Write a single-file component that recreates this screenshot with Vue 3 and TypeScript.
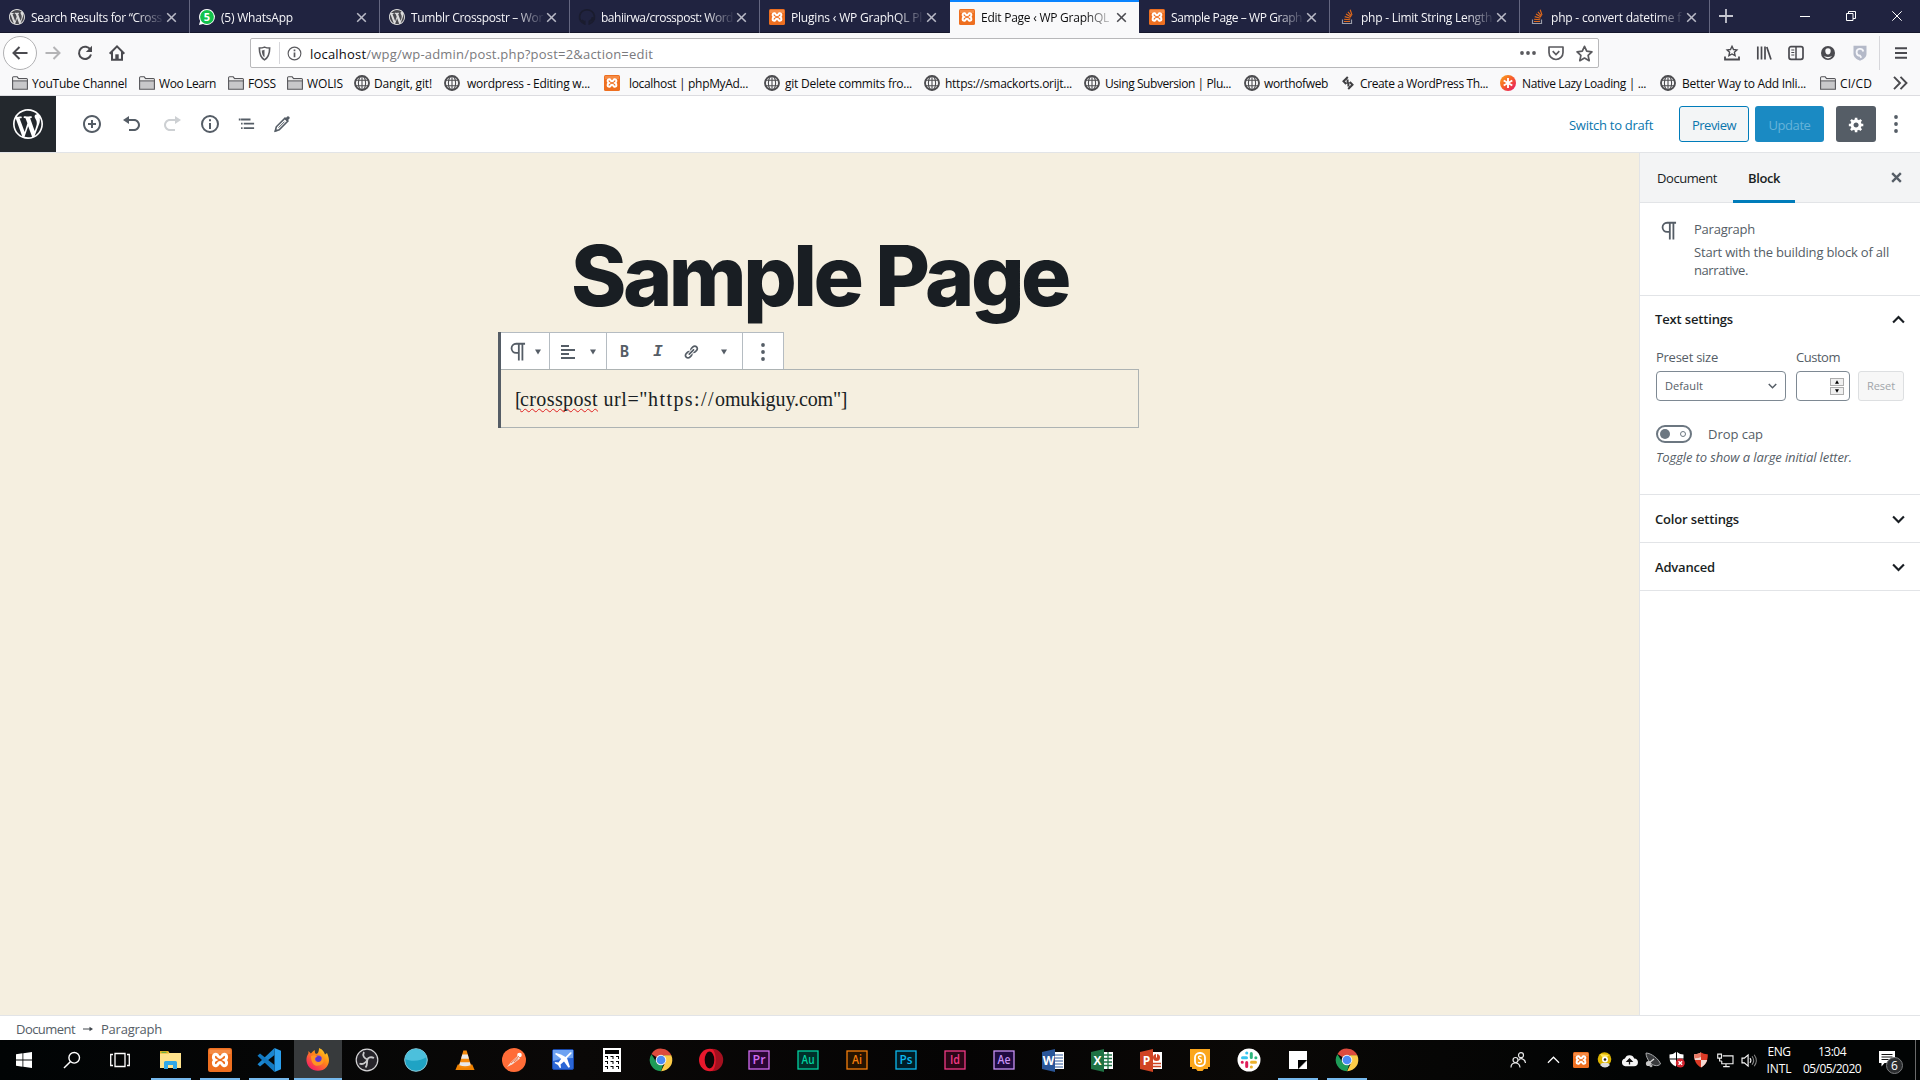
<script setup lang="ts">
import { h, type Directive, type FunctionalComponent } from 'vue'

/* Spreads a label's characters so that it takes the given width. */
const vFit: Directive<HTMLElement, number> = {
  mounted(el, binding) {
    const count = [...(el.textContent ?? '')].length
    if (!count || !binding.value) return
    const natural = el.getBoundingClientRect().width
    el.style.letterSpacing = `${(binding.value - natural) / count}px`
  },
}

const wpPath =
  'M20 10c0-5.51-4.49-10-10-10C4.48 0 0 4.49 0 10c0 5.52 4.48 10 10 10 5.51 0 10-4.48 10-10zM7.78 15.37L4.37 6.22c.55-.02 1.17-.08 1.17-.08.5-.06.44-1.13-.06-1.11 0 0-1.45.11-2.37.11-.18 0-.37 0-.58-.01C4.12 2.69 6.87 1.11 10 1.11c2.33 0 4.45.87 6.05 2.34-.68-.11-1.65.39-1.65 1.58 0 .74.45 1.36.9 2.1.35.61.55 1.36.55 2.46 0 1.49-1.4 5-1.4 5l-3.03-8.37c.54-.02.82-.17.82-.17.5-.05.44-1.25-.06-1.22 0 0-1.44.12-2.38.12-.87 0-2.33-.12-2.33-.12-.5-.03-.56 1.2-.06 1.22l.92.08 1.26 3.41zM17.41 10c.24-.64.74-1.87.43-4.25.7 1.29 1.05 2.71 1.05 4.25 0 3.29-1.73 6.24-4.4 7.78.97-2.59 1.94-5.2 2.92-7.78zM6.1 18.09C3.12 16.65 1.11 13.53 1.11 10c0-1.3.23-2.48.72-3.59C3.25 10.3 4.67 14.2 6.1 18.09zm4.03-6.63l2.58 6.98c-.86.29-1.76.45-2.71.45-.79 0-1.57-.11-2.29-.33.81-2.38 1.62-4.74 2.42-7.10z'

const adobe = (label: string, color: string, bg: string) =>
  `<rect x="1" y="3" width="20" height="18" fill="${bg}" stroke="${color}" stroke-width="1.3"/><text x="11" y="16.3" font-size="12" font-family="Open Sans, sans-serif" font-weight="600" text-anchor="middle" textLength="${label === 'Ai' || label === 'Id' ? 10 : 13}" lengthAdjust="spacingAndGlyphs" fill="${color}">${label}</text>`

const office = (label: string, color: string, page: string) =>
  `<path d="M11 4h11v17H11z" fill="#fff"/>${page}<path d="M0 4l13-3v23L0 21z" fill="${color}"/><text x="6.5" y="17" font-size="12" font-weight="700" font-family="Open Sans, sans-serif" text-anchor="middle" fill="#fff">${label}</text>`

/* [viewBox, markup] */
const icons: Record<string, [string, string]> = {
  wp: ['0 0 20 20', `<path fill="currentColor" d="${wpPath}"/>`],
  wpFav: ['0 0 20 20', `<circle cx="10" cy="10" r="9.6" fill="#4b4b50"/><path fill="#dcdcdc" d="${wpPath}"/>`],
  whatsapp: ['0 0 16 16', '<path d="M8 0a8 8 0 1 1-4 15L0 16l1.100-4A8 8 0 0 1 8 0z" fill="#fff"/><circle cx="8" cy="8" r="6.900" fill="#12c24b"/><text x="8" y="12" font-size="11" font-weight="700" font-family="Open Sans, sans-serif" text-anchor="middle" fill="#fff">5</text>'],
  github: ['0 0 16 16', '<path d="M8 .8A7.200 7.200 0 0 0 5.700 14.900v-2.400c-2 .3-2.400-1-2.900-1.500M8 .8a7.200 7.200 0 0 1 2.300 14.100v-2.600c2-.5 3.200-1.700 3.200-4.400" fill="none" stroke="#1a1c2e" stroke-width="1.700"/>'],
  xampp: ['0 0 16 16', '<rect width="16" height="16" rx="1.500" fill="#ee6f20"/><rect x="1" y="1" width="14" height="3" fill="#f58b45"/><path d="M5.600 4.300C3.400 3.600 2.900 7 4.800 8c-1.900 1-1.400 4.400.8 3.700C6.800 11.300 6.700 9.700 8 9.700s1.200 1.600 2.400 2c2.200.7 2.700-2.700.8-3.700 1.900-1 1.400-4.400-.8-3.700C9.200 4.700 9.300 6.300 8 6.300s-1.200-1.600-2.400-2z" fill="none" stroke="#fff" stroke-width="2"/>'],
  stack: ['0 0 16 16', '<path d="M3.500 10.500v4h9v-4" fill="none" stroke="#9a9ca8" stroke-width="1.200"/><path d="M5 12.500h6M5.100 10.200l6 .6M5.700 7.600l5.700 1.600M7 5l5 3M8.900 2.800l3.600 4.400M11.200.8l1.800 5.300" stroke="#e0691c" stroke-width="1.150"/>'],
  x: ['0 0 12 12', '<path d="M1.300 1.300l9.400 9.400M10.700 1.300l-9.400 9.400" stroke="currentColor" stroke-width="1.700"/>'],
  plus: ['0 0 14 14', '<path d="M7 0v14M0 7h14" stroke="currentColor" stroke-width="1.800"/>'],
  winMin: ['0 0 10 10', '<path d="M0 5.500h10" stroke="#fff"/>'],
  winMax: ['0 0 10 10', '<path d="M.5 2.500h6.500v7H.5zM2.500 2.500v-2h7v7H7" fill="none" stroke="#fff"/>'],
  winClose: ['0 0 10 10', '<path d="M.3.3l9.400 9.400M9.700.3L.3 9.700" stroke="#fff"/>'],
  back: ['0 0 16 16', '<path d="M15.500 8H1.500M7.500 2L1.500 8l6 6" fill="none" stroke="currentColor" stroke-width="2"/>'],
  fwd: ['0 0 16 16', '<path d="M.5 8h14M8.500 2l6 6-6 6" fill="none" stroke="currentColor" stroke-width="2"/>'],
  reload: ['0 0 16 16', '<path d="M13.500 5A6.100 6.100 0 1 0 14 9.500" fill="none" stroke="currentColor" stroke-width="2"/><path d="M15 .8V7H8.800z" fill="currentColor"/>'],
  home: ['0 0 16 16', '<path d="M.7 8.700L8 1.400l7.300 7.300M3 7v7.800h10V7" fill="none" stroke="currentColor" stroke-width="2"/><path d="M6.300 9.300h3.400V15H6.300z" fill="currentColor"/>'],
  shieldHalf: ['0 0 16 16', '<path d="M8 1.200c1.800.8 3.700 1 5.500 1 0 6-1 10-5.500 12.600C3.500 12.200 2.500 8.200 2.500 2.200c1.800 0 3.700-.2 5.500-1z" fill="none" stroke="currentColor" stroke-width="1.700"/><path d="M8 4v8c-2-1.500-2.700-3.500-2.900-7.300C6.100 4.600 7 4.400 8 4z" fill="currentColor"/>'],
  infoThin: ['0 0 16 16', '<circle cx="8" cy="8" r="6.800" fill="none" stroke="currentColor" stroke-width="1.200"/><path d="M8 7v5M8 3.800v1.800" stroke="currentColor" stroke-width="1.800"/>'],
  dots: ['0 0 16 16', '<g fill="currentColor"><circle cx="2" cy="8" r="1.900"/><circle cx="8" cy="8" r="1.900"/><circle cx="14" cy="8" r="1.900"/></g>'],
  pocket: ['0 0 16 16', '<path d="M1 2h14v5.500a7 7 0 0 1-14 0z" fill="none" stroke="currentColor" stroke-width="1.700" stroke-linejoin="round"/><path d="M4.700 6.200L8 9.500l3.300-3.300" fill="none" stroke="currentColor" stroke-width="1.700"/>'],
  star: ['0 0 16 16', '<path d="M8 1.200l2.100 4.600 4.900.6-3.600 3.400 1 5L8 12.300l-4.400 2.500 1-5L1 6.400l4.900-.6z" fill="none" stroke="currentColor" stroke-width="1.600" stroke-linejoin="round"/>'],
  starTray: ['0 0 16 16', '<path d="M8 1.300l1.500 3.200 3.400.4-2.500 2.400.7 3.400L8 9l-3.100 1.700.7-3.400-2.500-2.400 3.400-.4z" fill="none" stroke="currentColor" stroke-width="1.400"/><path d="M1 11.500v3h14v-3" fill="none" stroke="currentColor" stroke-width="1.800"/>'],
  library: ['0 0 16 16', '<path d="M1.800 1.500v13M5.500 1.500v13M9 1.500v13M10.800 2l4.200 12.500" stroke="currentColor" stroke-width="1.700"/>'],
  sidebar: ['0 0 16 16', '<rect x="1" y="1.700" width="14" height="12.600" rx="2" fill="none" stroke="currentColor" stroke-width="1.700"/><path d="M8 2v12" stroke="currentColor" stroke-width="1.500"/><path d="M3.300 5h3M3.300 7.500h3M3.300 10h3" stroke="currentColor"/>'],
  account: ['0 0 16 16', '<circle cx="8" cy="8" r="7" fill="currentColor"/><path d="M8 3.200a2.700 2.700 0 0 1 2.700 2.900C10.700 8 9.700 9.500 8 9.500S5.300 8 5.300 6.100A2.700 2.700 0 0 1 8 3.200z" fill="#f9f9fa"/><path d="M3.800 10.800q4.200 2.400 8.400 0-1.600 2.600-4.200 2.600t-4.200-2.600z" fill="#f9f9fa"/>'],
  ghost: ['0 0 16 16', '<path d="M1.500 .8h13V9c0 3-2.500 5-6.500 6.800C4 14 1.500 12 1.500 9z" fill="#b4b9c8"/><path d="M11.300 6.500a3.400 3.400 0 1 0-3.300 4.200l1.300 2" fill="none" stroke="#f5f6fa" stroke-width="1.800"/>'],
  menu: ['0 0 14 14', '<path d="M1 2.200h12M1 7h12M1 11.800h12" stroke="currentColor" stroke-width="2"/>'],
  folder: ['0 0 16 14', '<path d="M.6 13.200V1.800q0-1 1-1h3.600l1.400 1.800h7.800q1 0 1 1v9.600z" fill="#c8c8ca" stroke="#56565a" stroke-width="1.100"/><path d="M1.200 1.400h3.600L6 3.200h8.800v1.600H1.200z" fill="#f2f2f2"/><path d="M.6 4.900h14.800" stroke="#56565a" stroke-width="1"/>'],
  globe: ['0 0 16 16', '<g fill="none" stroke="#4d4d50"><circle cx="8" cy="8" r="7" stroke-width="1.900"/><ellipse cx="8" cy="8" rx="3.600" ry="7" stroke-width="1.100"/><path d="M8 1v14M1.500 5.300h13M1.500 10.700h13" stroke-width="1.100"/></g>'],
  bolt: ['0 0 14 16', '<path d="M6.800 2L2.500 6.300 5.200 9M7.200 14l4.300-4.300L8.800 7M6.600 4.500v4.300M7.400 11.500V7.200" fill="none" stroke="#3f3f42" stroke-width="2"/>'],
  lazy: ['0 0 16 16', '<defs><linearGradient id="lz" x1="0" y1="0" x2="1" y2="1"><stop offset="0" stop-color="#fba919"/><stop offset=".5" stop-color="#f65a2c"/><stop offset="1" stop-color="#e4106f"/></linearGradient></defs><circle cx="8" cy="8" r="8" fill="url(#lz)"/><path d="M8 3v10M3.700 5.500l8.600 5M12.300 5.500l-8.600 5" stroke="#fff" stroke-width="1.900"/>'],
  chevrons: ['0 0 16 14', '<path d="M2 .8L8 7l-6 6.200M8.500.8l6 6.200-6 6.200" fill="none" stroke="#4a4a4e" stroke-width="1.900"/>'],
  insert: ['0 0 20 20', '<path fill="currentColor" d="M10 1c-5 0-9 4-9 9s4 9 9 9 9-4 9-9-4-9-9-9zm0 16c-3.900 0-7-3.100-7-7s3.100-7 7-7 7 3.100 7 7-3.100 7-7 7zm1-11H9v3H6v2h3v3h2v-3h3V9h-3V6z"/>'],
  undo: ['0 0 20 20', '<path fill="currentColor" d="M12 5H7V2L1 6l6 4V7h5c2.200 0 4 1.800 4 4s-1.800 4-4 4H7v2h5c3.300 0 6-2.700 6-6s-2.700-6-6-6z"/>'],
  redo: ['0 0 20 20', '<path fill="currentColor" d="M8 5h5V2l6 4-6 4V7H8c-2.200 0-4 1.800-4 4s1.800 4 4 4h5v2H8c-3.300 0-6-2.700-6-6s2.700-6 6-6z"/>'],
  info: ['0 0 20 20', '<circle cx="10" cy="10" r="8" fill="none" stroke="currentColor" stroke-width="2"/><path d="M10 9v6M10 5.200v2.100" stroke="currentColor" stroke-width="2"/>'],
  outline: ['0 0 20 20', '<path d="M4.500 5h10.500M7.500 9.500H19M7.500 14.500H19" stroke="currentColor" stroke-width="2"/><path d="M2 4h2v2H2zM4.500 8.500h1.700v2H4.500zM4.500 13.500h1.700v2H4.500z" fill="currentColor"/>'],
  pencil: ['0 0 20 20', '<path d="M3.300 17l1-4.200 8.700-8.700 2.900 2.900-8.700 8.700z" fill="none" stroke="currentColor" stroke-width="1.600"/><path d="M12.700 5.200l2.500-2.700q1-.8 2 .2t.2 2.100l-2.700 2.500zM2.500 17.800l.8-3.200 2.300 2.300z" fill="currentColor"/><path d="M6.500 13.700l6-6" stroke="currentColor"/>'],
  gear: ['0 0 20 20', '<path fill="currentColor" d="M18 12h-2.180c-.17.7-.44 1.350-.81 1.930l1.540 1.540-2.100 2.100-1.540-1.540c-.58.36-1.230.63-1.910.79V19H8v-2.180c-.68-.16-1.330-.43-1.910-.79l-1.540 1.540-2.120-2.120 1.540-1.540c-.36-.58-.63-1.230-.79-1.910H1V9.030h2.170c.16-.7.44-1.350.8-1.940L2.430 5.550l2.100-2.100 1.540 1.540c.58-.37 1.240-.64 1.930-.81V2h3v2.180c.68.16 1.330.43 1.910.79l1.540-1.540 2.120 2.120-1.540 1.540c.36.59.64 1.240.8 1.940H18V12zm-8.500 1.500c1.660 0 3-1.340 3-3s-1.340-3-3-3-3 1.340-3 3 1.340 3 3 3z"/>'],
  vdots: ['0 0 20 20', '<g fill="currentColor"><circle cx="10" cy="3" r="1.900"/><circle cx="10" cy="10" r="1.900"/><circle cx="10" cy="17" r="1.900"/></g>'],
  para: ['0 0 18 20', '<path d="M17 1.800H7.500a4.800 4.800 0 0 0 0 9.600h2.300M10.400 1.800V19.500M14.200 1.800V19.500" fill="none" stroke="currentColor" stroke-width="1.900"/>'],
  alignLeft: ['0 0 16 16', '<path d="M1 2h8M1 6h14M1 10h8M1 14h14" stroke="currentColor" stroke-width="2"/>'],
  caret: ['0 0 6 6', '<path d="M0 .5h6l-3 5z" fill="currentColor"/>'],
  link: ['0 0 20 20', '<path fill="currentColor" d="M17.740 2.760c1.680 1.690 1.680 4.410 0 6.100l-1.530 1.520c-1.120 1.120-2.700 1.470-4.140 1.090l2.620-2.610.76-.77.76-.76c.84-.84.84-2.200 0-3.040-.84-.85-2.200-.85-3.040 0l-.77.76-3.380 3.380c-.37-1.440-.02-3.020 1.100-4.140l1.520-1.530c1.690-1.680 4.420-1.680 6.100 0zM8.590 13.430l5.340-5.340c.42-.42.42-1.100 0-1.520-.44-.43-1.130-.39-1.530 0l-5.330 5.340c-.42.42-.42 1.100 0 1.520.44.43 1.130.39 1.520 0zm-.76 2.290l4.140-4.150c.38 1.440.03 3.020-1.090 4.140l-1.520 1.530c-1.690 1.680-4.410 1.680-6.100 0-1.680-1.680-1.680-4.420 0-6.100l1.530-1.520c1.120-1.120 2.700-1.470 4.140-1.100l-4.140 4.150c-.85.84-.85 2.200 0 3.050.84.84 2.200.84 3.040 0z"/>'],
  close: ['0 0 12 12', '<path d="M2 2l8 8M10 2l-8 8" stroke="#555d66" stroke-width="2.200"/>'],
  up: ['0 0 12 8', '<path d="M1 6.700l5-5 5 5" fill="none" stroke="currentColor" stroke-width="2"/>'],
  down: ['0 0 12 8', '<path d="M1 1.300l5 5 5-5" fill="none" stroke="currentColor" stroke-width="2"/>'],
  start: ['0 0 16 16', '<path d="M0 2.200L6.500 1.300v6.300H0zM7.300 1.200L16 0v7.600H7.300zM0 8.400h6.500v6.300L0 13.800zM7.300 8.400H16V16l-8.700-1.200z" fill="#fff"/>'],
  search: ['0 0 18 18', '<circle cx="11.200" cy="6.800" r="5.300" fill="none" stroke="#fff" stroke-width="1.400"/><path d="M7.300 10.700L1 17" stroke="#fff" stroke-width="1.500"/>'],
  taskview: ['0 0 20 16', '<path d="M5 1.500h10v13H5zM3 2.500H.7v11H3M17 2.500h2.300v11H17" fill="none" stroke="#fff" stroke-width="1.300"/>'],
  explorer: ['0 0 22 20', '<path d="M0 1h8l1.500 2H21v15H0z" fill="#ffe38c"/><path d="M0 1h8l1 2.500H0z" fill="#e6b422"/><path d="M1.500 1.800h5v1h-5z" fill="#4cae4f"/><path d="M4 19v-6.500q0-1.500 1.500-1.500h10q1.500 0 1.500 1.500V19h-4v-4H8v4z" fill="#31a8e8"/>'],
  vscode: ['0 0 24 24', '<path d="M17.500 0L24 2.800v18.400L17.500 24z" fill="#2ba0ee"/><path d="M17.500 0v7L3 18.500.5 16.200z" fill="#1b86d0"/><path d="M17.500 24v-7L3 5.500.5 7.800z" fill="#1279c2"/>'],
  firefox: ['0 0 24 24', '<defs><linearGradient id="ff" x1="1" y1="0" x2=".2" y2="1"><stop offset="0" stop-color="#ffe226"/><stop offset=".45" stop-color="#ff8a16"/><stop offset="1" stop-color="#f5156c"/></linearGradient></defs><path d="M13 0c4 1.500 5.300 4.500 6 6.500L21 5c2.800 6 2.600 10-.4 14-4 5-12.500 5-16.800.8C-.6 15-.2 9 2.400 5.500V3l2.400 2.600C6 4.500 7 2.500 9 2.200 8.500 4 9 5 10 6c2 0 3-3 3-6z" fill="url(#ff)"/><circle cx="12" cy="12.500" r="5" fill="#7440e0"/><path d="M5 8c3-1.700 5-.4 7 1-2.500-.2-3.300 1.300-3 2.500.4 2.400 3 2.800 4.500 2 1.700-.8 3-3 1.500-6.500 3.500 2.500 4 7 .6 9.500C10 20 5 16.500 5 8z" fill="#ff9422"/><circle cx="12.700" cy="11" r="2.700" fill="#5d36c8"/>'],
  obs: ['0 0 24 24', '<circle cx="12" cy="12" r="10.800" fill="#26242a" stroke="#d4d4d6" stroke-width="1.200"/><g fill="none" stroke="#c9c9cb" stroke-width="1.800"><path d="M9 4c-2 4 .5 6.500 3.500 7.500M19 10c-3-1.500-6-.5-6.500 1.500-1 3 .3 6-2 8M4.500 15.500c3 1.500 7-1 8-4"/></g>'],
  teal: ['0 0 24 24', '<circle cx="12" cy="12" r="11.300" fill="#1fa3c4" stroke="#8cc9d8"/><path d="M.8 11C8 14 17 13 22.800 9A11.300 11.300 0 0 0 .8 11z" fill="#4cc0dc"/>'],
  vlc: ['0 0 22 24', '<path d="M3 17h16l2.500 6H.5z" fill="#f08200"/><path d="M9.200 1.500h3.600L18 19.500q-7 3-14 0z" fill="#f58a0b"/><path d="M8 6h6l1.300 4.500H6.700zM5.600 14.500h10.800l.8 3.200q-6 2.200-12.400 0z" fill="#e9e9e9"/>'],
  postman: ['0 0 24 24', '<circle cx="12" cy="12" r="12" fill="#ff6c37"/><path d="M5 19l4.500-5.500 6-5.500 2.500 2.500-7.500 5.800z" fill="#f6dfd5"/><circle cx="17.500" cy="7" r="2.300" fill="#fff"/><path d="M9 15l8-7M12 14l4-3.500" stroke="#e66030" stroke-width=".8"/>'],
  plane: ['0 0 22 22', '<rect x=".5" y=".5" width="21" height="20" rx="1.500" fill="#2b66d6" stroke="#1746a8"/><path d="M1 1h20v8Q10 9 1 12z" fill="#6ea3f2"/><path d="M4 4l5 1.500L13.500 8 18 3.500q2-1 1.500 1L15 9l3 9-1.500.7-4.500-6.200-3.500 3 .5 3-1 .8-2-3.300L2.500 14l.8-1 3.200.4 2.700-3.600L3 5z" fill="#fff"/>'],
  calc: ['0 0 18 24', '<path fill="#fff" d="M0 0h18v24H0z"/><path d="M2 2h14v4H2zM2 8h3v3H4V9H2zM7.500 8h3v3h-1V9h-2zM13 8h3v3h-1V9h-2zM2 13h3v3H4v-2H2zM7.500 13h3v3h-1v-2h-2zM13 13h3v3h-1v-2h-2zM2 18h3v3H4v-2H2zM7.500 18h3v3h-1v-2h-2zM13 18h3v3h-1v-2h-2z" fill="#050505"/>'],
  chrome: ['0 0 24 24', '<path d="M12 12L2.500 6A11.200 11.200 0 0 1 22.400 7.500H12z" fill="#dd4b3e"/><path d="M22.300 7.300A11.200 11.200 0 0 1 12 23.200L16.500 14 15 7.300z" fill="#fccb48"/><path d="M12 23.200A11.200 11.200 0 0 1 2.400 6.200L8 15l6 2z" fill="#1e9c58"/><circle cx="12" cy="12" r="5.300" fill="#f4f4f4"/><circle cx="12" cy="12" r="4.300" fill="#4c8bf5"/>'],
  opera: ['0 0 24 24', '<ellipse cx="12" cy="12" rx="11" ry="11.300" fill="#e8182c"/><path d="M14 .8a11 11 0 0 1 0 22.400c5-3 5-19 0-22.400z" fill="#a4101f"/><ellipse cx="11.500" cy="12" rx="4.800" ry="8.500" fill="#0c0506"/>'],
  pr: ['0 0 22 24', adobe('Pr', '#d16bf2', '#2a0634')],
  au: ['0 0 22 24', adobe('Au', '#00d2a0', '#00302a')],
  ai: ['0 0 22 24', adobe('Ai', '#f57f0c', '#261300')],
  ps: ['0 0 22 24', adobe('Ps', '#0cb8ee', '#001d26')],
  id: ['0 0 22 24', adobe('Id', '#f23a86', '#2b0616')],
  ae: ['0 0 22 24', adobe('Ae', '#c893f5', '#1f0a40')],
  word: ['0 0 22 25', office('W', '#2a5699', '<path d="M13 7h8M13 10h8M13 13h8M13 16h8M13 19h8" stroke="#2a5699" stroke-width="1.200"/>')],
  excel: ['0 0 22 25', office('X', '#1f7244', '<path d="M13 7h8M13 10.500h8M13 14h8M13 17.500h8M17 4v17" stroke="#1f7244" stroke-width="1.300"/>')],
  ppt: ['0 0 22 25', office('P', '#d04423', '<circle cx="16.500" cy="9.500" r="3.500" fill="#d04423"/><path d="M16.500 9.500V5.500" stroke="#fff"/><path d="M13 15.500h8M13 18.500h8" stroke="#d04423" stroke-width="1.300"/>')],
  scratch: ['0 0 22 24', '<path d="M1 1h20v18h-2v2h-4l-1.500 2h-5L7 21H3v-2H1z" fill="#fba61c"/><rect x="6" y="5" width="10" height="13" rx="4.500" fill="none" stroke="#fff" stroke-width="1.800"/><path d="M12.500 8.500q-3-1-3 1c0 2 3 1.500 3 3.500s-2 2-3.500 1.300" fill="none" stroke="#fff" stroke-width="1.400"/>'],
  slack: ['0 0 24 24', '<circle cx="12" cy="12" r="11.500" fill="#fff"/><g stroke-width="3" stroke-linecap="round"><path d="M5.500 9.700h4M9.700 5h.1" stroke="#36c5f0"/><path d="M14.300 5.500v4M18.800 9.700h.1" stroke="#2eb67d"/><path d="M14.500 14.300h4M14.300 18.900h.1" stroke="#ecb22e"/><path d="M9.700 14.500v4M5.200 14.300h.1" stroke="#e01e5a"/></g>'],
  sticky: ['0 0 18 18', '<path d="M0 0h18v9L9 18H0z" fill="#fff"/><path d="M18 9H9v9z" fill="#000"/><path d="M18 9.500V18H9.500z" fill="#fff"/>'],
  people: ['0 0 16 16', '<g fill="none" stroke="#e8e8e8" stroke-width="1.200"><circle cx="11" cy="3.200" r="2.500"/><circle cx="5.500" cy="8" r="2.500"/><path d="M1 15.500c0-6 8.500-6 9 0M8.500 8.500C10 5.500 15 6.300 15.500 11"/></g>'],
  trayUp: ['0 0 14 8', '<path d="M1 7l6-6 6 6" fill="none" stroke="#fff" stroke-width="1.300"/>'],
  disc: ['0 0 16 16', '<circle cx="7.500" cy="7" r="6.800" fill="#ddb400"/><path d="M3 2l9 1-5 5z" fill="#ffe45a"/><circle cx="8" cy="7.500" r="3" fill="#fff"/><circle cx="8" cy="7.500" r="1.300" fill="#222"/><path d="M3 13q5 5 10 0l-2-2H5z" fill="#dcdcdc"/>'],
  cloud: ['0 0 16 16', '<path d="M4 13.500a3.800 3.800 0 0 1-.3-7.400A4.600 4.600 0 0 1 12.400 6 3.700 3.700 0 0 1 12 13.500z" fill="#f5f5f5"/><path d="M8 11.800V8M5.800 8.800L8 6.500l2.200 2.300z" fill="#111" stroke="#111" stroke-width="1.200"/>'],
  dish: ['0 0 16 16', '<path d="M1 1c5 0 13 6 14.500 11-3 3-8 1.500-10.500-1.500S1 4 1 1z" fill="#393b3d" stroke="#a9abad"/><path d="M4 11l5-4" stroke="#ddd" stroke-width="1.300"/><circle cx="3.500" cy="11.500" r="2.600" fill="#c8c8c8"/><circle cx="6" cy="13.800" r="1.500" fill="#b0b0b0"/>'],
  defender: ['0 0 16 16', '<path d="M7 0v6.500H.5V2.500Q4 2.500 7 0zM8 0q3 2.500 6.500 2.500v4H8zM.6 7.500H7v7Q1.500 12 .6 7.500zM8 7.500h6.400Q13.500 12 8 14.500z" fill="#fff"/><circle cx="11.300" cy="11" r="4.500" fill="#d62430"/><path d="M9.500 9.200l3.600 3.600M13.100 9.200l-3.600 3.600" stroke="#fff" stroke-width="1.300"/>'],
  redShield: ['0 0 16 16', '<path d="M8 .5q3 2 6.800 1.800C15 9 12.500 13 8 15.500 3.500 13 1 9 1.200 2.300 5 2.500 8 .5 8 .5z" fill="#dc3a26"/><path d="M8 8h6.200q-1.200 4.700-6.200 7.500z" fill="#f2d8d2"/><path d="M8 .5Q5 2.500 1.200 2.300 1.100 5.300 1.800 8H8z" fill="#f2d8d2"/><path d="M8 .5Q5 2.500 1.200 2.300q0 2 .4 4Q5 6.500 8 5z" fill="#e87a66"/>'],
  network: ['0 0 18 16', '<g fill="none" stroke="#f2f2f2" stroke-width="1.200"><path d="M6 3h11v8.500H5V8.500M9.500 12v2.500M6.500 14.500h7"/><path d="M.7 1.200h4V5.500h-4zM2.700 5.500v3H5"/></g>'],
  speaker: ['0 0 18 16', '<path d="M1 5.500h2.500L7.500 2v12l-4-3.500H1z" fill="none" stroke="#fff" stroke-width="1.200"/><path d="M9.500 5.500q2 2.500 0 5" fill="none" stroke="#eee" stroke-width="1.200"/><path d="M11.700 3.500q3.500 4.500 0 9M14 1.800q4.500 6.200 0 12.400" fill="none" stroke="#888" stroke-width="1.100"/>'],
  notify: ['0 0 16 16', '<path d="M0 0h16v12H5.500L2.500 15.500V12H0z" fill="#fff"/><path d="M2.500 3.500h11M2.500 6h11M2.500 8.500h7" stroke="#111"/>'],
}

const Ico: FunctionalComponent<{ n: string; w: number; t?: number }> = (p) =>
  h('svg', {
    class: 'ico',
    viewBox: icons[p.n][0],
    width: p.w,
    height: p.t ?? p.w,
    innerHTML: icons[p.n][1],
  })
Ico.props = ['n', 'w', 't']

const tabs = [
  { icon: 'wpFav', label: 'Search Results for “Cross', w: 131 },
  { icon: 'whatsapp', label: '(5) WhatsApp', w: 72 },
  { icon: 'wpFav', label: 'Tumblr Crosspostr – Wor', w: 132 },
  { icon: 'github', label: 'bahiirwa/crosspost: Word', w: 132 },
  { icon: 'xampp', label: 'Plugins ‹ WP GraphQL Pl', w: 131 },
  { icon: 'xampp', label: 'Edit Page ‹ WP GraphQL', w: 128, active: true },
  { icon: 'xampp', label: 'Sample Page – WP Graph', w: 131 },
  { icon: 'stack', label: 'php - Limit String Length', w: 131 },
  { icon: 'stack', label: 'php - convert datetime f', w: 130 },
]

const bookmarks = [
  { icon: 'folder', label: 'YouTube Channel', w: 95, cell: 127 },
  { icon: 'folder', label: 'Woo Learn', w: 57, cell: 89 },
  { icon: 'folder', label: 'FOSS', w: 28, cell: 59 },
  { icon: 'folder', label: 'WOLIS', w: 36, cell: 67 },
  { icon: 'globe', label: 'Dangit, git!', w: 58, cell: 90 },
  { icon: 'globe', label: 'wordpress - Editing w...', w: 123, cell: 160, gap: 7 },
  { icon: 'xampp', label: 'localhost | phpMyAd...', w: 119, cell: 160, gap: 9 },
  { icon: 'globe', label: 'git Delete commits fro...', w: 127, cell: 160, gap: 5 },
  { icon: 'globe', label: 'https://smackorts.orijt...', w: 127, cell: 160, gap: 5 },
  { icon: 'globe', label: 'Using Subversion | Plu...', w: 126, cell: 160, gap: 5 },
  { icon: 'globe', label: 'worthofweb', w: 64, cell: 96 },
  { icon: 'bolt', label: 'Create a WordPress Th...', w: 128, cell: 160 },
  { icon: 'lazy', label: 'Native Lazy Loading | ...', w: 124, cell: 160, gap: 6 },
  { icon: 'globe', label: 'Better Way to Add Inli...', w: 124, cell: 160, gap: 6 },
  { icon: 'folder', label: 'CI/CD', w: 32, cell: 72 },
]

const navRight = ['starTray', 'library', 'sidebar', 'account', 'ghost']

const apps = [
  { icon: 'explorer', w: 22, t: 20, open: true },
  { icon: 'xampp', w: 24, open: true },
  { icon: 'vscode', w: 24, open: true },
  { icon: 'firefox', w: 24, open: true, active: true },
  { icon: 'obs', w: 24 },
  { icon: 'teal', w: 24 },
  { icon: 'vlc', w: 20, t: 22 },
  { icon: 'postman', w: 24 },
  { icon: 'plane', w: 22 },
  { icon: 'calc', w: 18, t: 24 },
  { icon: 'chrome', w: 24 },
  { icon: 'opera', w: 24 },
  { icon: 'pr', w: 22, t: 24 },
  { icon: 'au', w: 22, t: 24 },
  { icon: 'ai', w: 22, t: 24 },
  { icon: 'ps', w: 22, t: 24 },
  { icon: 'id', w: 22, t: 24 },
  { icon: 'ae', w: 22, t: 24 },
  { icon: 'word', w: 22, t: 25 },
  { icon: 'excel', w: 22, t: 25 },
  { icon: 'ppt', w: 22, t: 25 },
  { icon: 'scratch', w: 22, t: 24 },
  { icon: 'slack', w: 24 },
  { icon: 'sticky', w: 18, open: true },
  { icon: 'chrome', w: 24, open: true },
]

const tray = [
  { icon: 'xampp', w: 16 },
  { icon: 'disc', w: 16 },
  { icon: 'cloud', w: 17 },
  { icon: 'dish', w: 16 },
  { icon: 'defender', w: 16 },
  { icon: 'redShield', w: 16 },
  { icon: 'network', w: 17, t: 15 },
  { icon: 'speaker', w: 17, t: 15 },
]
</script>

<template>
  <div class="screen">
    <div class="tabs">
      <div v-for="(t, i) in tabs" :key="i" class="tab" :class="{ active: t.active, before: i === 4 }">
        <Ico :n="t.icon" :w="16" />
        <span class="tab-text"><span v-fit="t.w" class="fit">{{ t.label }}</span></span>
        <Ico n="x" :w="11" />
      </div>
      <span class="new-tab"><Ico n="plus" :w="14" /></span>
      <span class="win"><Ico n="winMin" :w="10" /></span>
      <span class="win"><Ico n="winMax" :w="10" /></span>
      <span class="win"><Ico n="winClose" :w="10" /></span>
    </div>

    <div class="nav">
      <span class="back"><Ico n="back" :w="16" /></span>
      <span class="nav-btn dim"><Ico n="fwd" :w="16" /></span>
      <span class="nav-btn"><Ico n="reload" :w="16" /></span>
      <span class="nav-btn"><Ico n="home" :w="16" /></span>
      <div class="url">
        <Ico n="shieldHalf" :w="15" />
        <i class="url-line"></i>
        <Ico n="infoThin" :w="15" />
        <span v-fit="343" class="fit url-text"><b>localhost</b>/wpg/wp-admin/post.php?post=2&amp;action=edit</span>
        <span class="url-icons">
          <Ico n="dots" :w="16" /><Ico n="pocket" :w="16" /><Ico n="star" :w="17" />
        </span>
      </div>
      <div class="nav-right">
        <Ico v-for="n in navRight" :key="n" :n="n" :w="16" />
      </div>
      <span class="burger"><Ico n="menu" :w="14" /></span>
    </div>

    <div class="bookmarks">
      <span v-for="b in bookmarks" :key="b.label" class="bm" :style="{ width: b.cell + 'px', gap: (b.gap ?? 4) + 'px' }">
        <Ico :n="b.icon" :w="16" :t="b.icon === 'folder' ? 14 : 16" />
        <span v-fit="b.w" class="fit">{{ b.label }}</span>
      </span>
      <Ico n="chevrons" :w="16" :t="14" />
    </div>

    <div class="header">
      <span class="wp-logo"><Ico n="wp" :w="30" /></span>
      <div class="tools">
        <Ico n="insert" :w="20" /><Ico n="undo" :w="20" class="t-undo" /><Ico n="redo" :w="20" class="t-redo" />
        <Ico n="info" :w="20" class="t-info" /><Ico n="outline" :w="18" class="t-outline" /><Ico n="pencil" :w="20" />
      </div>
      <span class="draft"><span v-fit="84" class="fit">Switch to draft</span></span>
      <span class="btn preview"><span v-fit="44" class="fit">Preview</span></span>
      <span class="btn update"><span v-fit="42" class="fit">Update</span></span>
      <span class="btn gear"><Ico n="gear" :w="17" /></span>
      <span class="more"><Ico n="vdots" :w="20" /></span>
    </div>

    <div class="body">
      <main class="canvas">
        <h1><span v-fit="497" class="fit">Sample Page</span></h1>
        <div class="block">
          <div class="toolbar">
            <div class="grp g1"><Ico n="para" :w="17" :t="19" /><Ico n="caret" :w="6" /></div>
            <div class="grp g2"><Ico n="alignLeft" :w="16" /><Ico n="caret" :w="6" /></div>
            <div class="grp g3">
              <span class="bold">B</span><span class="ital">I</span><Ico n="link" :w="16" /><Ico n="caret" :w="6" />
            </div>
            <div class="grp g4"><Ico n="vdots" :w="20" :t="20" /></div>
          </div>
          <p class="para">
            <span v-fit="5" class="fit">[</span><u v-fit="78" class="fit">crosspost</u><span v-fit="50" class="fit">&nbsp;url="</span><span v-fit="67" class="fit">https://</span><span v-fit="118" class="fit">omukiguy.com</span><span v-fit="14" class="fit">"]</span>
          </p>
        </div>
      </main>

      <aside class="side">
        <div class="side-tabs">
          <span class="st doc"><span v-fit="60" class="fit">Document</span></span>
          <span class="st on"><span v-fit="32" class="fit">Block</span></span>
          <Ico n="close" :w="13" />
        </div>
        <div class="card">
          <Ico n="para" :w="17" :t="19" />
          <div>
            <div class="card-title"><span v-fit="61" class="fit">Paragraph</span></div>
            <div class="card-text"><span v-fit="195" class="fit">Start with the building block of all</span></div>
            <div class="card-text"><span v-fit="54" class="fit">narrative.</span></div>
          </div>
        </div>
        <section class="panel text">
          <header><span v-fit="78" class="fit">Text settings</span><Ico n="up" :w="13" :t="9" /></header>
          <div class="labels">
            <span class="lab1"><span v-fit="62" class="fit">Preset size</span></span>
            <span v-fit="44" class="fit">Custom</span>
          </div>
          <div class="controls">
            <div class="select"><span v-fit="38" class="fit">Default</span><Ico n="down" :w="9" :t="6" /></div>
            <div class="number">
              <div class="spin"><span><Ico n="caret" :w="6" :t="4" class="flip" /></span><span><Ico n="caret" :w="6" :t="4" /></span></div>
            </div>
            <div class="reset"><span v-fit="28" class="fit">Reset</span></div>
          </div>
          <div class="toggle-row">
            <span class="toggle"><i></i><b></b></span><span v-fit="55" class="fit">Drop cap</span>
          </div>
          <div class="help"><span v-fit="196" class="fit">Toggle to show a large initial letter.</span></div>
        </section>
        <section class="panel"><header><span v-fit="84" class="fit">Color settings</span><Ico n="down" :w="13" :t="9" /></header></section>
        <section class="panel"><header><span v-fit="60" class="fit">Advanced</span><Ico n="down" :w="13" :t="9" /></header></section>
      </aside>
    </div>

    <footer class="crumbs">
      <span v-fit="59" class="fit">Document</span>
      <svg class="arrow" viewBox="0 0 10 6" width="10" height="6"><path d="M0 3h8" stroke="#40464d" /><path d="M6.500 .8L10 3 6.500 5.200z" fill="#40464d" /></svg>
      <span v-fit="61" class="fit">Paragraph</span>
    </footer>

    <div class="taskbar">
      <span class="sys"><Ico n="start" :w="16" /></span>
      <span class="sys"><Ico n="search" :w="18" /></span>
      <span class="sys last"><Ico n="taskview" :w="20" :t="16" /></span>
      <span v-for="(a, i) in apps" :key="i" class="app" :class="{ open: a.open, active: a.active }">
        <Ico :n="a.icon" :w="a.w" :t="a.t" />
      </span>
      <div class="tray">
        <Ico n="people" :w="16" />
        <span class="tray-up"><Ico n="trayUp" :w="13" :t="8" /></span>
        <span v-for="t in tray" :key="t.icon" class="tray-cell"><Ico :n="t.icon" :w="t.w" :t="t.t" /></span>
        <div class="lang"><span v-fit="23" class="fit">ENG</span><span v-fit="25" class="fit">INTL</span></div>
        <div class="clock"><span v-fit="28" class="fit">13:04</span><span v-fit="58" class="fit">05/05/2020</span></div>
        <span class="notify"><Ico n="notify" :w="16" /><b>6</b></span>
        <i class="peek"></i>
      </div>
    </div>
  </div>
</template>

<style>
body {
  overflow: hidden;
}
</style>

<style scoped>
.screen {
  width: 1920px;
  height: 1080px;
  display: flex;
  flex-direction: column;
  overflow: hidden;
  background: #fff;
  font: 12px/16px 'Open Sans', 'Noto Sans', sans-serif;
  color: #0c0c0d;
}
.screen * {
  box-sizing: border-box;
}
.fit {
  display: inline-block;
  white-space: nowrap;
}
.ico {
  display: block;
  flex: none;
  overflow: visible;
}

/* browser tabs */
.tabs {
  display: flex;
  height: 33px;
  flex: none;
  background: #202340;
  border-bottom: 1px solid #15172c;
  color: #f5f5f8;
}
.tab {
  width: 190px;
  height: 33px;
  display: flex;
  align-items: center;
  padding: 1px 0 0 9px;
  border-right: 1px solid #646680;
}
.tab.before {
  border-right-color: #202340;
}
.tab-text {
  width: 134px;
  margin: 1px 1px 0 6px;
  overflow: hidden;
  white-space: nowrap;
  -webkit-mask-image: linear-gradient(90deg, #000 78%, transparent 100%);
  mask-image: linear-gradient(90deg, #000 78%, transparent 100%);
}
.tab > .ico:last-child {
  color: #b9bac6;
}
.tab.active {
  background: #f9f9fa;
  color: #0c0c0d;
  border-right-color: #202340;
  box-shadow: inset 0 2px 0 #0a84ff;
}
.tab.active > .ico:last-child {
  color: #4a4a4f;
}
.new-tab {
  width: 34px;
  display: flex;
  align-items: center;
  padding-left: 9px;
  margin-right: 38px;
  color: #c5c6d0;
}
.win {
  width: 46px;
  display: flex;
  align-items: center;
  justify-content: center;
}

/* navigation bar */
.nav {
  height: 40px;
  flex: none;
  display: flex;
  align-items: center;
  background: #f9f9fa;
  color: #4a4a4f;
  padding-left: 3px;
}
.back {
  width: 34px;
  height: 34px;
  border: 1px solid #b1b1b3;
  border-radius: 50%;
  background: #fff;
  display: flex;
  align-items: center;
  justify-content: center;
}
.nav-btn {
  width: 32px;
  display: flex;
  justify-content: center;
}
.nav-btn.dim {
  color: #b4b4b6;
}
.url {
  width: 1349px;
  height: 30px;
  margin-left: 117px;
  border: 1px solid #b8b8ba;
  border-radius: 2px;
  background: #fff;
  display: flex;
  align-items: center;
  padding: 0 5px 0 6px;
  color: #5a5a5e;
}
.url-line {
  width: 1px;
  height: 22px;
  background: #d7d7db;
  margin: 0 7px;
}
.url-text {
  margin: 2px 0 0 8px;
  font-size: 13px;
  color: #7a7a7d;
}
.url-text b {
  font-weight: 400;
  color: #0c0c0d;
}
.url-icons {
  margin-left: auto;
  display: flex;
  align-items: center;
  gap: 12px;
}
.nav-right {
  margin-left: 125px;
  display: flex;
  gap: 16px;
}
.burger {
  height: 34px;
  border-left: 1px solid #d7d7db;
  margin-left: 11px;
  padding-left: 14px;
  display: flex;
  align-items: center;
}

/* bookmarks */
.bookmarks {
  height: 23px;
  flex: none;
  display: flex;
  align-items: center;
  background: #f9f9fa;
  border-bottom: 1px solid #dcdce0;
  padding: 0 0 2px 12px;
}
.bm {
  display: flex;
  align-items: center;
  flex: none;
}
.bm .fit {
  margin-top: 1px;
}

/* editor header */
.header {
  height: 57px;
  flex: none;
  display: flex;
  align-items: center;
  border-bottom: 1px solid #e2e4e7;
  color: #555d66;
  font-size: 13px;
}
.wp-logo {
  width: 56px;
  height: 56px;
  background: #23282d;
  color: #fff;
  display: flex;
  align-items: center;
  justify-content: center;
}
.tools {
  display: flex;
  align-items: center;
  gap: 16px;
  margin-left: 26px;
}
.t-undo,
.t-redo {
  margin-left: 4px;
}
.t-redo {
  color: #cdd0d3;
}
.t-info {
  margin-left: 2px;
}
.t-outline {
  margin: 0 1px;
}
.draft {
  margin-left: auto;
  margin-right: 26px;
  padding-top: 2px;
  color: #0a76ad;
}
.btn {
  height: 36px;
  border-radius: 3px;
  display: flex;
  align-items: center;
  justify-content: center;
  padding-top: 2px;
}
.preview {
  width: 70px;
  border: 1px solid #007cba;
  background: #f3f5f6;
  color: #0a76ad;
}
.update {
  width: 69px;
  margin-left: 6px;
  background: #1a8ac3;
  color: #66b3d9;
}
.gear {
  width: 40px;
  margin-left: 12px;
  padding-top: 0;
  background: #555d66;
  color: #fff;
}
.more {
  margin: 0 14px 0 10px;
}

/* editor */
.body {
  flex: 1;
  display: flex;
  min-height: 0;
}
.canvas {
  flex: 1;
  background: #f5efe0;
}
h1 {
  margin: 73px 0 0;
  height: 106px;
  font: 800 84px/100px Inter, sans-serif;
  color: #191e23;
  text-align: center;
}
.block {
  width: 641px;
  height: 96px;
  margin-left: 498px;
  border-left: 3px solid #555d66;
}
.toolbar {
  display: flex;
  width: 283px;
  height: 37px;
  background: #fff;
  border: 1px solid #b5bcc2;
  border-width: 1px 1px 0 0;
  color: #555d66;
}
.grp {
  display: flex;
  align-items: center;
  border-right: 1px solid #b5bcc2;
  padding-top: 1px;
}
.g1 {
  width: 49px;
  padding-left: 8px;
  gap: 9px;
}
.g2 {
  width: 57px;
  padding-left: 10px;
  gap: 14px;
}
.g3 {
  width: 136px;
  padding-left: 13px;
}
.g3 .ico:last-child {
  margin-left: 22px;
}
.bold {
  width: 33px;
  font: 700 15px/18px 'DejaVu Sans Mono', monospace;
}
.ital {
  width: 30px;
  font: italic 700 16px/18px 'Liberation Mono', monospace;
}
.g4 {
  flex: 1;
  justify-content: center;
  border-right: 0;
}
.para {
  margin: 0;
  height: 59px;
  border: 1px solid #adb3b3;
  border-left: 0;
  padding: 15px 0 0 14px;
  font: 20px/28px 'Liberation Serif', serif;
  color: #191e23;
}
.para u {
  text-decoration: underline wavy #e02020 1px;
  text-underline-offset: 2px;
  text-decoration-skip-ink: none;
}

/* settings sidebar */
.side {
  width: 281px;
  border-left: 1px solid #e2e4e7;
  background: #fff;
  font-size: 13px;
  color: #555d66;
}
.side-tabs {
  height: 50px;
  display: flex;
  align-items: center;
  background: #f3f4f5;
  border-bottom: 1px solid #e2e4e7;
  color: #191e23;
}
.st {
  height: 50px;
  display: flex;
  align-items: center;
  padding-top: 1px;
}
.doc {
  width: 93px;
  padding-left: 17px;
}
.on {
  width: 62px;
  padding-left: 15px;
  border-bottom: 3px solid #007cba;
  padding-top: 4px;
  font-weight: 600;
}
.side-tabs > .ico {
  margin-left: 95px;
}
.card {
  height: 93px;
  display: flex;
  gap: 17px;
  padding: 17px 0 0 20px;
  border-bottom: 1px solid #e2e4e7;
}
.card > .ico {
  margin-top: 1px;
}
.card-title {
  line-height: 18px;
  margin-bottom: 5px;
}
.card-text {
  line-height: 18px;
}
.panel {
  border-bottom: 1px solid #e2e4e7;
}
.panel header {
  height: 47px;
  display: flex;
  align-items: center;
  justify-content: space-between;
  padding: 1px 15px 0 15px;
  color: #191e23;
  font-weight: 600;
}
.panel.text {
  height: 199px;
}
.panel.text header {
  height: 50px;
  padding-bottom: 4px;
  padding-top: 0;
}
.labels {
  display: flex;
  padding-left: 16px;
  margin-top: 3px;
}
.lab1 {
  width: 140px;
}
.controls {
  display: flex;
  padding-left: 16px;
  margin-top: 6px;
  font-size: 11px;
}
.select {
  width: 130px;
  height: 30px;
  border: 1px solid #7e8993;
  border-radius: 4px;
  display: flex;
  align-items: center;
  justify-content: space-between;
  padding: 0 8px;
}
.number {
  width: 54px;
  height: 30px;
  margin-left: 10px;
  border: 1px solid #7e8993;
  border-radius: 4px;
  display: flex;
  align-items: center;
  justify-content: flex-end;
  padding-right: 5px;
}
.spin {
  width: 14px;
  height: 17px;
  display: flex;
  flex-direction: column;
  gap: 1px;
  color: #000;
}
.spin span {
  flex: 1;
  background: #f0f0f0;
  border: 1px solid #adadad;
  display: flex;
  align-items: center;
  justify-content: center;
}
.flip {
  transform: rotate(180deg);
}
.reset {
  width: 46px;
  height: 30px;
  margin-left: 8px;
  border: 1px solid #dddfe1;
  border-radius: 3px;
  background: #f7f7f7;
  color: #a0a5aa;
  display: flex;
  align-items: center;
  justify-content: center;
}
.toggle-row {
  display: flex;
  align-items: center;
  gap: 16px;
  margin: 24px 0 0 16px;
  height: 18px;
}
.toggle {
  width: 36px;
  height: 18px;
  border: 2px solid #6c7781;
  border-radius: 9px;
  display: flex;
  align-items: center;
  justify-content: space-between;
  padding: 0 4px 0 2px;
}
.toggle i {
  width: 10px;
  height: 10px;
  border-radius: 50%;
  background: #6c7781;
}
.toggle b {
  width: 6px;
  height: 6px;
  border-radius: 50%;
  border: 1.5px solid #6c7781;
}
.help {
  margin: 5px 0 0 16px;
  font-style: italic;
  line-height: 18px;
}

/* breadcrumb footer */
.crumbs {
  height: 25px;
  flex: none;
  display: flex;
  align-items: center;
  gap: 8px;
  padding: 1px 0 0 16px;
  border-top: 1px solid #e2e4e7;
  font-size: 13px;
  color: #555d66;
}

/* taskbar */
.taskbar {
  height: 40px;
  flex: none;
  display: flex;
  background: linear-gradient(90deg, #010405, #0a0807 30%, #050404 50%, #0a0806 65%, #020404 85%);
  color: #fff;
}
.sys {
  width: 48px;
  display: flex;
  align-items: center;
  justify-content: center;
}
.sys.last {
  width: 51px;
  padding-right: 3px;
}
.app {
  width: 49px;
  padding-right: 1px;
  display: flex;
  align-items: center;
  justify-content: center;
  flex: none;
}
.app.open {
  background: linear-gradient(#76b9ed, #76b9ed) 4px bottom / 40px 2px no-repeat;
}
.app.active {
  background: linear-gradient(#76b9ed, #76b9ed) left bottom / 48px 2px no-repeat,
    linear-gradient(#373a3c, #373a3c) left / 48px 40px no-repeat;
}
.tray {
  margin-left: auto;
  display: flex;
  align-items: center;
}
.tray-up {
  margin: 0 9px 0 21px;
}
.tray-cell {
  width: 24px;
  display: flex;
  justify-content: center;
}
.lang,
.clock {
  display: flex;
  flex-direction: column;
  align-items: center;
  line-height: 17px;
  width: 26px;
  margin-left: 5px;
}
.clock {
  width: 58px;
  margin-left: 11px;
}
.notify {
  position: relative;
  margin-left: 18px;
  margin-top: -2px;
}
.notify b {
  position: absolute;
  left: 7px;
  top: 6px;
  width: 17px;
  height: 17px;
  border: 1px solid #7a7c7e;
  border-radius: 50%;
  background: #2a2c2e;
  font: 400 12px/15px 'Open Sans', sans-serif;
  text-align: center;
}
.peek {
  width: 1px;
  height: 40px;
  background: #6a6a6a;
  margin: 0 4px 0 20px;
}
</style>
